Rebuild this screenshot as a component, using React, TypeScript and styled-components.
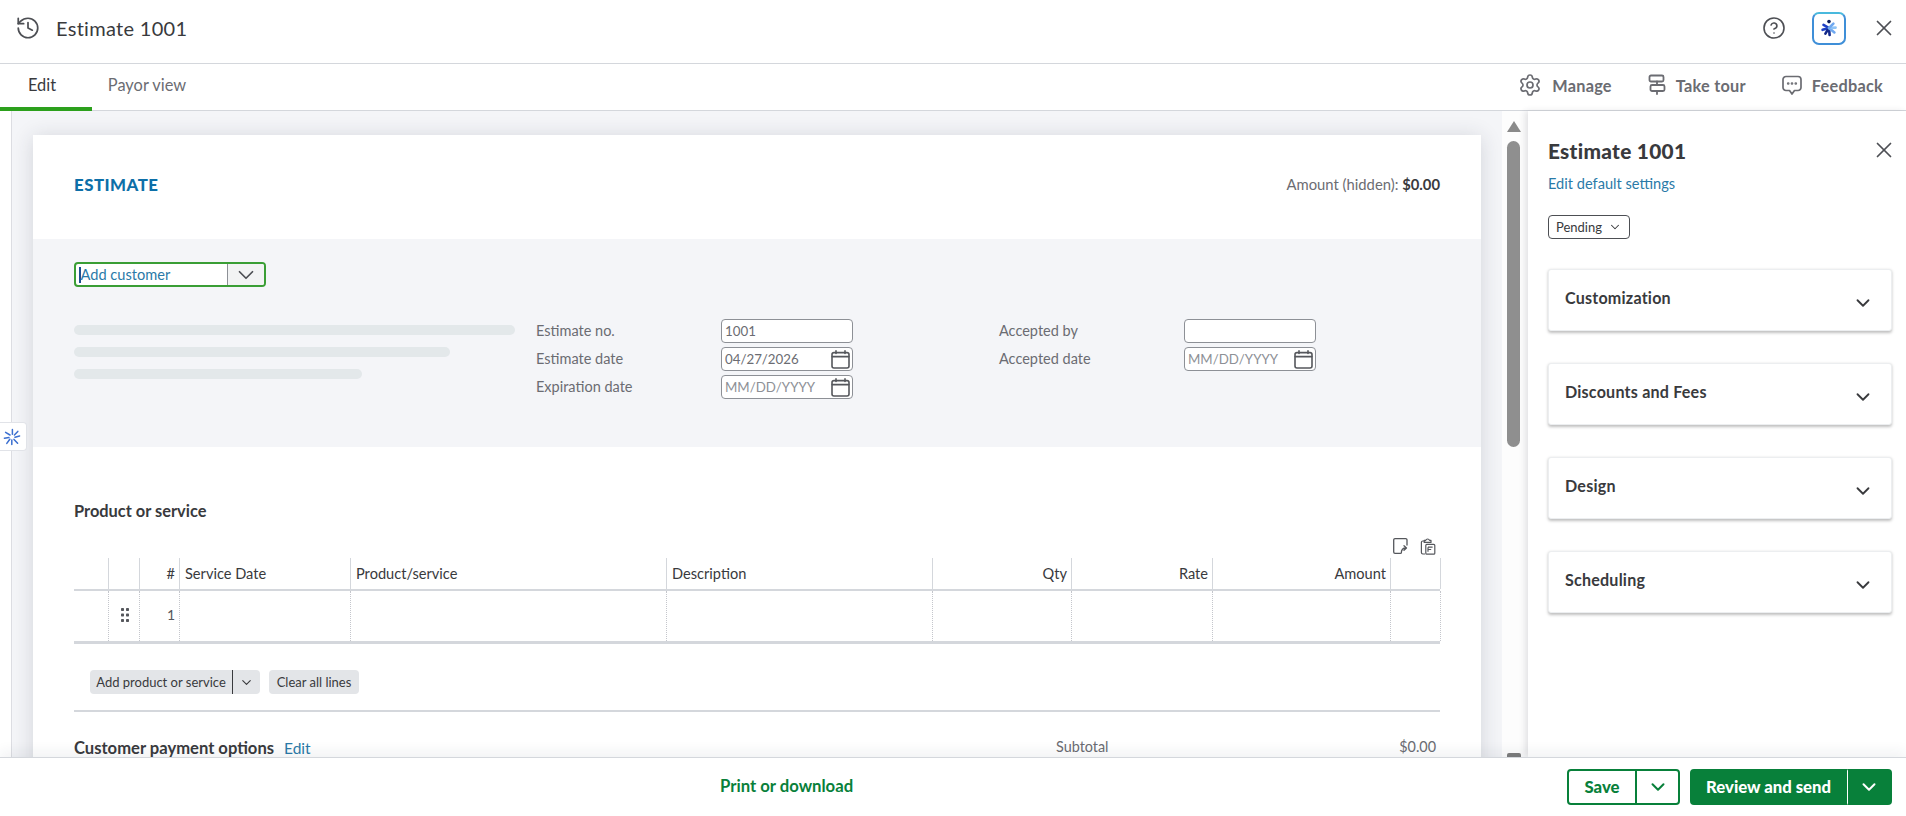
import React from "react";
import styled, { createGlobalStyle } from "styled-components";
import { ChevronDown, CircleHelp, History, Settings, X } from "lucide-react";

const Global = createGlobalStyle`
  html, body { margin: 0; padding: 0; height: 100%; background: #fff; }
  #root { height: 100%; }
  * { box-sizing: border-box; }
  body { font-family: "Lato", "Open Sans", sans-serif; color: #393a3d; overflow: hidden; }
`;

const green = "#08803a";

const Page = styled.div`
  height: 100vh;
  display: flex;
  flex-direction: column;
  overflow: hidden;
`;

const Header = styled.header`
  height: 64px;
  flex: none;
  display: flex;
  align-items: center;
  padding: 0 9px 7px 15px;
  border-bottom: 1px solid #d4d7dc;
`;

const HeaderTitle = styled.h1`
  margin: 0 0 0 15px;
  font-size: 20px;
  font-weight: 400;
  letter-spacing: 0.3px;
  color: #393a3d;
`;

const HeaderActions = styled.div`
  margin-left: auto;
  display: flex;
  align-items: center;
`;

const IconPlain = styled.span<{ $ml?: number }>`
  display: flex;
  color: #4d4f54;
  margin-left: ${(p) => p.$ml ?? 0}px;
`;

const AiButton = styled.span`
  width: 34px;
  height: 33px;
  margin-left: 26px;
  display: flex;
  align-items: center;
  justify-content: center;
  border-radius: 7px;
  border: 2px solid #3f8fd8;
  border-top-color: #49b9dd;
`;

const TabBar = styled.nav`
  height: 47px;
  flex: none;
  display: flex;
  align-items: stretch;
  padding-right: 23px;
  border-bottom: 1px solid #d4d7dc;
`;

const Tab = styled.span<{ $active?: boolean }>`
  width: ${(p) => (p.$active ? 92 : 110)}px;
  display: flex;
  align-items: center;
  justify-content: center;
  padding: 0 ${(p) => (p.$active ? 8 : 0)}px 3px 0;
  font-size: 16.4px;
  color: ${(p) => (p.$active ? "#393a3d" : "#6b6c72")};
  border-bottom: 4px solid ${(p) => (p.$active ? "#2ca01c" : "transparent")};
  margin-bottom: -1px;
`;

const TabTools = styled.div`
  margin-left: auto;
  display: flex;
  align-items: center;
  gap: 36px;
  padding-bottom: 4px;
`;

const Tool = styled.span`
  display: flex;
  align-items: center;
  gap: 10px;
  font-size: 16.3px;
  font-weight: 700;
  letter-spacing: 0.25px;
  color: #6b6c72;
`;

const Main = styled.main`
  flex: 1;
  min-height: 0;
  display: flex;
`;

const Canvas = styled.div`
  flex: 1;
  min-width: 0;
  margin-left: 11px;
  padding: 24px 0 0 21px;
  background: #f4f5f8;
  border-left: 1px solid #dcdde2;
  overflow: hidden;
`;

const AiTab = styled.span`
  position: absolute;
  left: 0;
  top: 422px;
  width: 27px;
  height: 29px;
  padding-right: 3px;
  display: flex;
  align-items: center;
  justify-content: center;
  background: #fff;
  border: 1px solid #e1e3e8;
  border-left: none;
  border-radius: 0 4px 4px 0;
`;

const Card = styled.section`
  width: 1448px;
  height: 700px;
  background: #fff;
  box-shadow: 0 2px 20px rgba(40, 45, 60, 0.16);
`;

const CardTop = styled.div`
  height: 104px;
  display: flex;
  align-items: center;
  justify-content: space-between;
  padding: 0 41px;
  padding-bottom: 6px;
`;

const DocType = styled.h2`
  margin: 0;
  font-size: 16.8px;
  font-weight: 900;
  letter-spacing: 0.5px;
  color: #0d6fa8;
`;

const AmountLine = styled.div`
  font-size: 14.8px;
  color: #6b6c72;
  strong { color: #393a3d; font-weight: 700; }
`;

const CustomerBand = styled.div`
  height: 208px;
  padding: 23px 41px 0;
  background: #f4f5f8;
`;

const CustomerSelect = styled.div`
  width: 192px;
  height: 25px;
  display: flex;
  background: #fff;
  border: 2px solid #3a9e35;
  border-radius: 4px;
`;

const CustomerText = styled.span`
  flex: 1;
  display: flex;
  align-items: center;
  font-size: 14.6px;
  padding-left: 3px;
  color: #2a7aa8;
  &::before {
    content: "";
    width: 1.5px;
    height: 16px;
    background: #1c4f8f;
  }
`;

const CustomerCaret = styled.span`
  width: 37px;
  display: flex;
  align-items: center;
  justify-content: center;
  background: #f2f3f4;
  border-left: 1px solid #8d9096;
  border-radius: 0 2px 2px 0;
  color: #4d4f54;
`;

const FormRow = styled.div`
  display: grid;
  grid-template-columns: 462px 463px 1fr;
  margin-top: 32px;
`;

const Skeletons = styled.div`
  padding-top: 6px;
  display: flex;
  flex-direction: column;
  gap: 12px;
`;

const Skeleton = styled.span<{ $w: number }>`
  width: ${(p) => p.$w}px;
  height: 10px;
  border-radius: 5px;
  background: #e3e8ea;
`;

const FieldGrid = styled.div`
  display: grid;
  grid-template-columns: 185px 132px;
  grid-auto-rows: 24px;
  row-gap: 4px;
  align-items: center;
`;

const FieldLabel = styled.label`
  font-size: 14.5px;
  padding-bottom: 2px;
  color: #6b6c72;
`;

const Field = styled.div<{ $muted?: boolean }>`
  height: 24px;
  display: flex;
  align-items: center;
  justify-content: space-between;
  padding: 0 2px 0 3px;
  background: #fff;
  border: 1px solid #8d9096;
  border-radius: 4px;
  font-size: 13.3px;
  color: ${(p) => (p.$muted ? "#8d9096" : "#6b6c72")};
`;

const LinesSection = styled.div`
  padding: 54px 41px 0;
`;

const SectionTitle = styled.h3`
  margin: 0;
  font-size: 16.4px;
  line-height: 20px;
  font-weight: 700;
  color: #393a3d;
`;

const TableTools = styled.div`
  height: 16px;
  margin-top: 17px;
  display: flex;
  justify-content: flex-end;
  align-items: flex-start;
  gap: 12px;
  padding-right: 4px;
`;

const TableRow = styled.div<{ $head?: boolean }>`
  display: grid;
  grid-template-columns: 35px 31px 40px 171px 316px 266px 139px 141px 178px 50px;
  height: ${(p) => (p.$head ? 33 : 53)}px;
  margin-top: ${(p) => (p.$head ? 4 : 0)}px;
  border-bottom: ${(p) => (p.$head ? 2 : 3)}px solid #d4d7dc;
`;

const Cell = styled.div<{ $head?: boolean; $align?: "start" | "end" | "center" }>`
  display: flex;
  align-items: center;
  justify-content: ${(p) =>
    p.$align === "end" ? "flex-end" : p.$align === "center" ? "center" : "flex-start"};
  padding: 0 4px ${(p) => (p.$head ? 0 : 3)}px 5px;
  font-size: ${(p) => (p.$head ? 14.6 : 14)}px;
  color: ${(p) => (p.$head ? "#393a3d" : "#55575c")};
  border-right: 1px ${(p) => (p.$head ? "solid #d4d7dc" : "dotted #c4c6cc")};
`;

const LineActions = styled.div`
  margin: 26px 0 0 16px;
  display: flex;
  gap: 9px;
`;

const GreyButton = styled.span<{ $w: number; $split?: "left" | "right" }>`
  width: ${(p) => p.$w}px;
  height: 24px;
  display: flex;
  align-items: center;
  justify-content: center;
  font-size: 13px;
  color: #393a3d;
  background: #e3e5e8;
  border-radius: ${(p) => (p.$split === "left" ? "4px 0 0 4px" : p.$split === "right" ? "0 4px 4px 0" : "4px")};
  border-right: ${(p) => (p.$split === "left" ? "1px solid #393a3d" : "none")};
`;

const SplitGroup = styled.div`
  display: flex;
`;

const Rule = styled.hr`
  margin: 16px 0 0;
  border: none;
  height: 2px;
  background: #d4d7dc;
`;

const PaymentRow = styled.div`
  margin-top: 26px;
  display: flex;
  align-items: center;
`;

const PaymentTitle = styled.h3`
  margin: 0;
  font-size: 16.6px;
  font-weight: 700;
  color: #393a3d;
`;

const EditLink = styled.a`
  margin-left: 10px;
  font-size: 15.5px;
  color: #2a7aa8;
`;

const Totals = styled.div`
  margin-left: auto;
  margin-top: -3px;
  width: 384px;
  display: flex;
  justify-content: space-between;
  padding-right: 4px;
  font-size: 14.4px;
  color: #6b6c72;
`;

const ScrollRail = styled.div`
  width: 26px;
  flex: none;
  display: flex;
  flex-direction: column;
  align-items: center;
  justify-content: space-between;
  padding: 10px 3px 0 0;
  background: #fdfdfd;
`;

const RailUpper = styled.div`
  display: flex;
  flex-direction: column;
  align-items: center;
  gap: 9px;
`;

const ArrowUp = styled.span`
  width: 0;
  height: 0;
  border-left: 7px solid transparent;
  border-right: 7px solid transparent;
  border-bottom: 11px solid #8a8a8a;
`;

const Thumb = styled.span`
  width: 13px;
  height: 306px;
  border-radius: 7px;
  background: #8f8f8f;
`;

const ArrowStub = styled.span`
  width: 14px;
  height: 4px;
  border-radius: 2px 2px 0 0;
  background: #7d7d7d;
`;

const SidePanel = styled.aside`
  width: 378px;
  flex: none;
  padding: 27px 14px 0 20px;
  background: #fff;
  box-shadow: -3px 0 6px rgba(40, 45, 60, 0.12);
  position: relative;
`;

const PanelHead = styled.div`
  display: flex;
  align-items: center;
  justify-content: space-between;
  height: 24px;
  margin-right: -5px;
`;

const PanelTitle = styled.h2`
  margin: 0;
  font-size: 20.8px;
  font-weight: 900;
  letter-spacing: 0.3px;
  color: #393a3d;
`;

const PanelLink = styled.a`
  display: block;
  margin-top: 12px;
  font-size: 14.6px;
  line-height: 20px;
  color: #2a7aa8;
`;

const StatusPill = styled.span`
  width: 82px;
  height: 24px;
  margin-top: 21px;
  display: flex;
  align-items: center;
  justify-content: center;
  gap: 6px;
  font-size: 13px;
  color: #393a3d;
  border: 1.5px solid #4d4f54;
  border-radius: 4px;
`;

const Accordions = styled.div`
  margin-top: 30px;
  display: flex;
  flex-direction: column;
  gap: 32px;
`;

const Accordion = styled.div`
  height: 62px;
  display: flex;
  align-items: flex-start;
  justify-content: space-between;
  padding: 18px 17px 0 16px;
  background: #fff;
  border-radius: 3px;
  border: 1px solid #eceef0;
  box-shadow: 0 1.5px 3px rgba(0, 0, 0, 0.25);
  font-size: 16.1px;
  font-weight: 700;
  letter-spacing: 0.2px;
  color: #393a3d;
`;

const AccordionCaret = styled.span`
  display: flex;
  margin-top: 4px;
  color: #393a3d;
`;

const Footer = styled.footer`
  height: 59px;
  flex: none;
  display: flex;
  align-items: center;
  padding: 0 14px 2px 720px;
  background: #fff;
  border-top: 1px solid #d4d7dc;
  box-shadow: 0 -6px 12px rgba(40, 45, 60, 0.06);
  position: relative;
`;

const PrintLink = styled.a`
  font-size: 16.7px;
  font-weight: 700;
  color: ${green};
`;

const FooterActions = styled.div`
  margin-left: auto;
  display: flex;
  gap: 10px;
  padding-top: 2px;
`;

const ButtonGroup = styled.div`
  display: flex;
  height: 36px;
`;

const ActionButton = styled.span<{ $w: number; $solid?: boolean; $part: "main" | "caret" }>`
  width: ${(p) => p.$w}px;
  display: flex;
  align-items: center;
  justify-content: center;
  font-size: 16.7px;
  font-weight: 900;
  color: ${(p) => (p.$solid ? "#fff" : green)};
  background: ${(p) => (p.$solid ? green : "#fff")};
  border: 2px solid ${green};
  border-radius: ${(p) => (p.$part === "main" ? "4px 0 0 4px" : "0 4px 4px 0")};
  ${(p) =>
    p.$part === "caret"
      ? `border-left: ${p.$solid ? "1px solid #fff" : "none"};`
      : ""}
`;

const SparkIcon = () => (
  <svg width="20" height="20" viewBox="0 0 20 20" fill="none">
    <circle cx="10" cy="3.6" r="1.8" fill="#0b1d5e" />
    <g strokeWidth="2.6" strokeLinecap="round">
      <path d="M10 10 4.5 6.8" stroke="#1d3fc4" />
      <path d="M10 10 3.6 11.8" stroke="#1d3fc4" />
      <path d="M10 10 6.4 15.6" stroke="#12288a" />
      <path d="M10 10 10.6 17" stroke="#12288a" />
      <path d="M10 10 15.4 14.4" stroke="#6fa8f0" />
      <path d="M10 10 16.6 9.6" stroke="#8fc3f5" />
      <path d="M10 10 14.4 5.6" stroke="#6fa8f0" />
    </g>
  </svg>
);

const SparkOutline = () => (
  <svg width="18" height="18" viewBox="0 0 18 18" fill="none" stroke="#3b6fd0" strokeWidth="1.5" strokeLinecap="round">
    <path d="M9.4 6.2V1.5M7 7 2.6 4.4M11.4 7l3.4-3.6M12 9.2l4.6-1.2M11 11.4l3.6 3.8M8.8 12v4.6M6.8 11.2l-3 4.2M6 9.4l-4.6.8" />
  </svg>
);

const SignpostIcon = () => (
  <svg width="18" height="22" viewBox="0 0 18 22" fill="none" stroke="#6b6c72" strokeWidth="1.8" strokeLinecap="round" strokeLinejoin="round">
    <rect x="1.5" y="1.5" width="14" height="6" rx="1.5" />
    <rect x="2.5" y="11" width="14" height="6" rx="1.5" />
    <path d="M9 7.5V11M9 17v3" />
  </svg>
);

const FeedbackIcon = () => (
  <svg width="20" height="21" viewBox="0 0 20 21" fill="none" stroke="#6b6c72" strokeWidth="1.7" strokeLinejoin="round">
    <path d="M4 1.5h12a3 3 0 0 1 3 3v8a3 3 0 0 1-3 3h-3.5L10 19l-2.5-3.5H4a3 3 0 0 1-3-3v-8a3 3 0 0 1 3-3Z" />
    <circle cx="6.2" cy="8.5" r=".5" fill="#6b6c72" />
    <circle cx="10" cy="8.5" r=".5" fill="#6b6c72" />
    <circle cx="13.8" cy="8.5" r=".5" fill="#6b6c72" />
  </svg>
);

const CalendarIcon = () => (
  <svg width="19" height="19" viewBox="0 0 19 19" fill="none" stroke="#55575c" strokeWidth="1.6" strokeLinecap="round">
    <rect x="1" y="2.6" width="17" height="15.4" rx="2" />
    <path d="M1.2 6.6h16.6M5 .9v2.6M14 .9v2.6" />
  </svg>
);

const ExportIcon = () => (
  <svg width="15" height="16" viewBox="0 0 15 16" fill="none" stroke="#55575c" strokeWidth="1.3" strokeLinecap="round" strokeLinejoin="round">
    <path d="M14 7V2a1.3 1.3 0 0 0-1.3-1.3H2A1.3 1.3 0 0 0 .7 2v12A1.3 1.3 0 0 0 2 15.3h5.5" />
    <path d="M8.3 15c0-3 1.7-5 4.7-5M11 7.8l2.5 2.2L11 12.2" />
  </svg>
);

const ClipboardIcon = () => (
  <svg width="16" height="17" viewBox="0 0 16 17" fill="none" stroke="#55575c" strokeWidth="1.2" strokeLinejoin="round">
    <path d="M5.5 3H2.8a1.4 1.4 0 0 0-1.4 1.4v10.2A1.4 1.4 0 0 0 2.8 16H5" />
    <path d="M4.2 4.4V2.4h1.5a2 2 0 0 1 3.8 0H11v2H4.2Z" />
    <rect x="5.8" y="6.4" width="9" height="9.8" rx="1" />
    <path d="M8 9.2h4.6M8 11.5h3.2M8 9.2v4.6" />
  </svg>
);

const GripIcon = () => (
  <svg width="8" height="14" viewBox="0 0 8 14" fill="#55575c">
    {[0, 5].map((x) =>
      [0, 5.5, 11].map((y) => <rect key={`${x}-${y}`} x={x} y={y} width="3" height="3" rx=".7" />)
    )}
  </svg>
);

const headCells: { label: string; right?: boolean }[] = [
  { label: "" },
  { label: "" },
  { label: "#", right: true },
  { label: "Service Date" },
  { label: "Product/service" },
  { label: "Description" },
  { label: "Qty", right: true },
  { label: "Rate", right: true },
  { label: "Amount", right: true },
  { label: "" },
];

const panels = ["Customization", "Discounts and Fees", "Design", "Scheduling"];

export default function App() {
  return (
    <Page>
      <Global />
      <Header>
        <IconPlain>
          <History size={26} strokeWidth={1.6} />
        </IconPlain>
        <HeaderTitle>Estimate 1001</HeaderTitle>
        <HeaderActions>
          <IconPlain>
            <CircleHelp size={24} strokeWidth={1.6} />
          </IconPlain>
          <AiButton>
            <SparkIcon />
          </AiButton>
          <IconPlain $ml={25}>
            <X size={26} strokeWidth={1.6} />
          </IconPlain>
        </HeaderActions>
      </Header>

      <TabBar>
        <Tab $active>Edit</Tab>
        <Tab>Payor view</Tab>
        <TabTools>
          <Tool>
            <Settings size={24} strokeWidth={1.7} />
            Manage
          </Tool>
          <Tool>
            <SignpostIcon />
            Take tour
          </Tool>
          <Tool>
            <FeedbackIcon />
            Feedback
          </Tool>
        </TabTools>
      </TabBar>

      <Main>
        <AiTab>
          <SparkOutline />
        </AiTab>
        <Canvas>
          <Card>
            <CardTop>
              <DocType>ESTIMATE</DocType>
              <AmountLine>
                Amount (hidden): <strong>$0.00</strong>
              </AmountLine>
            </CardTop>

            <CustomerBand>
              <CustomerSelect>
                <CustomerText>Add customer</CustomerText>
                <CustomerCaret>
                  <ChevronDown size={26} strokeWidth={1.6} />
                </CustomerCaret>
              </CustomerSelect>
              <FormRow>
                <Skeletons>
                  <Skeleton $w={441} />
                  <Skeleton $w={376} />
                  <Skeleton $w={288} />
                </Skeletons>
                <FieldGrid>
                  <FieldLabel>Estimate no.</FieldLabel>
                  <Field>1001</Field>
                  <FieldLabel>Estimate date</FieldLabel>
                  <Field>
                    04/27/2026
                    <CalendarIcon />
                  </Field>
                  <FieldLabel>Expiration date</FieldLabel>
                  <Field $muted>
                    MM/DD/YYYY
                    <CalendarIcon />
                  </Field>
                </FieldGrid>
                <FieldGrid>
                  <FieldLabel>Accepted by</FieldLabel>
                  <Field />
                  <FieldLabel>Accepted date</FieldLabel>
                  <Field $muted>
                    MM/DD/YYYY
                    <CalendarIcon />
                  </Field>
                </FieldGrid>
              </FormRow>
            </CustomerBand>

            <LinesSection>
              <SectionTitle>Product or service</SectionTitle>
              <TableTools>
                <ExportIcon />
                <ClipboardIcon />
              </TableTools>
              <TableRow $head>
                {headCells.map((c, i) => (
                  <Cell key={i} $head $align={c.right ? "end" : "start"}>
                    {c.label}
                  </Cell>
                ))}
              </TableRow>
              <TableRow>
                {headCells.map((c, i) => (
                  <Cell key={i} $align={i === 1 ? "center" : c.right ? "end" : "start"}>
                    {i === 1 ? <GripIcon /> : i === 2 ? "1" : null}
                  </Cell>
                ))}
              </TableRow>
              <LineActions>
                <SplitGroup>
                  <GreyButton $w={143} $split="left">Add product or service</GreyButton>
                  <GreyButton $w={27} $split="right">
                    <ChevronDown size={15} strokeWidth={1.8} />
                  </GreyButton>
                </SplitGroup>
                <GreyButton $w={90}>Clear all lines</GreyButton>
              </LineActions>
              <Rule />
              <PaymentRow>
                <PaymentTitle>Customer payment options</PaymentTitle>
                <EditLink>Edit</EditLink>
                <Totals>
                  <span>Subtotal</span>
                  <span>$0.00</span>
                </Totals>
              </PaymentRow>
            </LinesSection>
          </Card>
        </Canvas>

        <ScrollRail>
          <RailUpper>
            <ArrowUp />
            <Thumb />
          </RailUpper>
          <ArrowStub />
        </ScrollRail>

        <SidePanel>
          <PanelHead>
            <PanelTitle>Estimate 1001</PanelTitle>
            <IconPlain>
              <X size={26} strokeWidth={1.6} />
            </IconPlain>
          </PanelHead>
          <PanelLink>Edit default settings</PanelLink>
          <StatusPill>
            Pending
            <ChevronDown size={14} strokeWidth={1.8} />
          </StatusPill>
          <Accordions>
            {panels.map((p) => (
              <Accordion key={p}>
                {p}
                <AccordionCaret>
                  <ChevronDown size={22} strokeWidth={2} />
                </AccordionCaret>
              </Accordion>
            ))}
          </Accordions>
        </SidePanel>
      </Main>

      <Footer>
        <PrintLink>Print or download</PrintLink>
        <FooterActions>
          <ButtonGroup>
            <ActionButton $w={70} $part="main">Save</ActionButton>
            <ActionButton $w={43} $part="caret">
              <ChevronDown size={22} strokeWidth={2.2} />
            </ActionButton>
          </ButtonGroup>
          <ButtonGroup>
            <ActionButton $w={157} $solid $part="main">Review and send</ActionButton>
            <ActionButton $w={45} $solid $part="caret">
              <ChevronDown size={22} strokeWidth={2.2} />
            </ActionButton>
          </ButtonGroup>
        </FooterActions>
      </Footer>
    </Page>
  );
}
